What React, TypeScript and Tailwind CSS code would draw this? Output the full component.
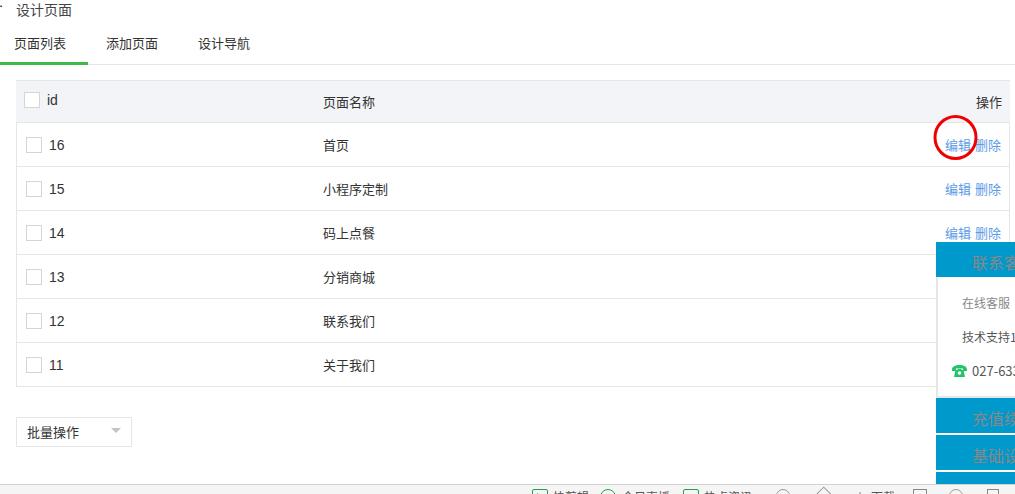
import { Phone } from "lucide-react";

const font = { };

const rows = [
  { id: 16, name: "首页" },
  { id: 15, name: "小程序定制" },
  { id: 14, name: "码上点餐" },
  { id: 13, name: "分销商城" },
  { id: 12, name: "联系我们" },
  { id: 11, name: "关于我们" },
];

const Check = ({ className = "" }: { className?: string }) => (
  <span className={`block w-4 h-4 bg-white border border-[#d5d5d5] ${className}`} />
);

const SidePanel = () => (
  <div className="absolute left-[936px] top-[242px] w-[160px] flex flex-col text-[#888888]">
    <div className="h-[35px] bg-[#0099cc] pl-[36px] text-base leading-[40px]">联系客服</div>
    <div className="h-[121px] bg-white border-l-2 border-b-2 border-[#e6e6e6] text-xs">
      <div className="pl-[24px] pt-[17px] leading-[17px]">在线客服</div>
      <div className="pl-[24px] pt-[17px] leading-[17px] text-[#555555]">技术支持1号</div>
      <div className="pl-[14px] pt-[17px] leading-[17px] flex items-center gap-[5px] text-[#555555]">
        <svg width="15" height="12" viewBox="0 0 15 12" className="shrink-0">
          <path d="M0 4.5C0 1.5 3.5 0 7.5 0S15 1.5 15 4.5V6h-4V3.5H4V6H0z" fill="#22c36b" />
          <path d="M3.5 5h2V4h4v1h2l1.500 7H2z" fill="#22c36b" />
          <circle cx="7.500" cy="8" r="1.800" fill="#ffffff" />
        </svg>
        <span className="text-[13px]">027-63322510</span>
      </div>
    </div>
    <div className="mt-0 h-[35px] bg-[#0099cc] pl-[36px] text-base leading-[40px]">充值续费</div>
    <div className="mt-[2px] h-[35px] bg-[#0099cc] pl-[36px] text-base leading-[40px]">基础设置</div>
    <div className="mt-[2px] h-[35px] bg-[#0099cc]" />
  </div>
);

const StatusBar = () => (
  <div className="absolute left-0 right-0 top-[484px] h-[30px] bg-[#f5f5f5] border-t border-[#d2d2d2] text-xs text-[#555555]">
    <div className="flex items-start pl-[532px] pt-[4px] leading-[16px]">
      <span className="w-[16px] h-[16px] border border-[#22a050] rounded-[2px] flex items-center justify-center">
        <span className="w-0 h-0 border-y-[4px] border-y-transparent border-l-[6px] border-l-[#22a050]" />
      </span>
      <span className="ml-[5px] w-[47px]">快剪辑</span>
      <span className="w-[16px] h-[16px] border border-[#22a050] rounded-full" />
      <span className="ml-[6px] w-[61px]">今日直播</span>
      <span className="w-[16px] h-[16px] border border-[#22a050] rounded-[2px]" />
      <span className="ml-[5px] w-[72px]">热点资讯</span>
      <span className="w-[14px] h-[16px] border border-[#999999] rounded-full" />
      <span className="ml-[26px] w-[14px] h-[16px] border border-[#999999] rotate-45" />
      <span className="ml-[24px] w-[14px] text-[#777777]">↓</span>
      <span className="ml-[3px] w-[42px]">下载</span>
      <span className="w-[14px] h-[16px] border border-[#888888]" />
      <span className="ml-[22px] w-[14px] h-[16px] border border-[#999999] rounded-full" />
      <span className="ml-[24px] w-[12px] h-[16px] border border-[#888888]" />
    </div>
  </div>
);

export default function App() {
  return (
    <div
      className="relative w-[1015px] h-[494px] overflow-hidden bg-white text-[13px] text-[#333333]"
      style={{ fontFamily: '"Noto Sans CJK SC", "Liberation Sans", sans-serif' }}
    >
      <div className="absolute left-0 top-[3px] text-[6px] leading-none text-black">⬩</div>
      <h1 className="pl-4 h-[18px] text-sm leading-[18px] font-normal text-[#444444]">设计页面</h1>

      <div className="mt-[14px] flex h-[33px] border-b border-[#e5e5e5] text-[13px] leading-[22px]">
        <div className="w-[88px] h-[33px] pl-[14px] border-b-[3px] border-[#3eb94e]">页面列表</div>
        <div className="w-[110px] pl-[18px]">添加页面</div>
        <div>设计导航</div>
      </div>

      <div className="ml-4 mr-[5px] mt-[15px]">
        <div className="h-[43px] bg-[#f2f4f8] border-t border-b border-[#e6e6e6] flex items-center pl-2 pr-2">
          <div className="w-[299px] flex items-center gap-[7px] -mt-1">
            <Check />
            <span className="text-sm" style={{ fontFamily: '"Liberation Sans", sans-serif' }}>id</span>
          </div>
          <div className="flex-1">页面名称</div>
          <div>操作</div>
        </div>
        {rows.map((r) => (
          <div key={r.id} className="h-[44px] flex items-center pl-[9px] pr-2 border-x border-b border-[#e6e6e6]">
            <div className="w-[297px] flex items-center gap-[7px]">
              <Check />
              <span className="text-sm" style={{ fontFamily: '"Liberation Sans", sans-serif' }}>{r.id}</span>
            </div>
            <div className="flex-1">{r.name}</div>
            <div className="text-[#5b9be6] flex gap-1">
              <span>编辑</span>
              <span>删除</span>
            </div>
          </div>
        ))}
      </div>

      <div className="ml-4 mt-[30px] w-[116px] h-[30px] border border-[#e6e6e6] flex items-center justify-between pl-[10px] pr-[10px] text-[13px]">
        <span>批量操作</span>
        <span className="w-0 h-0 border-x-[5px] border-x-transparent border-t-[5px] border-t-[#c4c4c4] -mt-1" />
      </div>

      <SidePanel />

      <svg width="46" height="46" viewBox="0 0 46 46" className="absolute left-[933px] top-[115px]">
        <ellipse cx="22.500" cy="22.500" rx="20.500" ry="21" fill="none" stroke="#f00000" strokeWidth="3" />
      </svg>

      <StatusBar />
    </div>
  );
}
